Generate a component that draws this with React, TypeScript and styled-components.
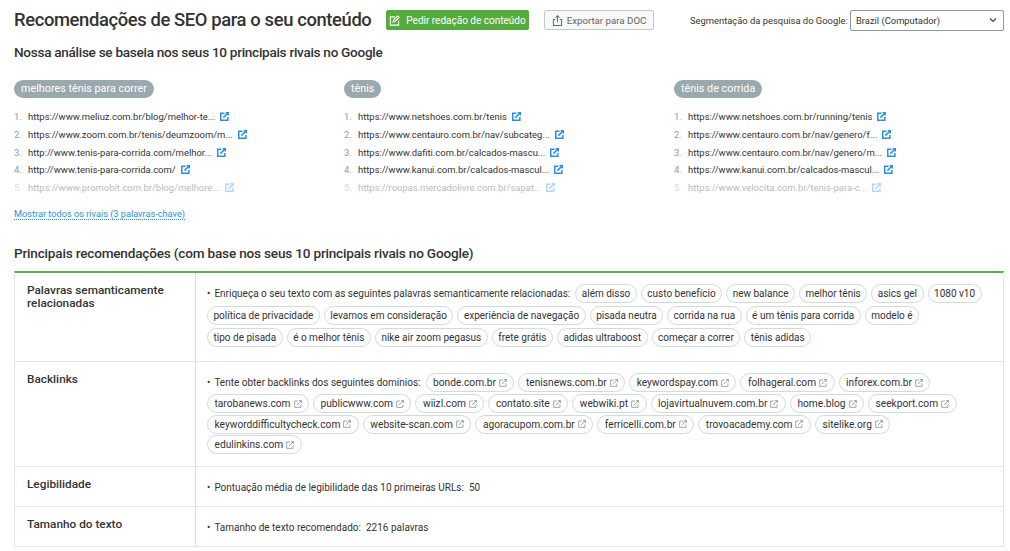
import React from "react";
import styled, { createGlobalStyle } from "styled-components";

const Global = createGlobalStyle`
  html, body { margin: 0; padding: 0; background: #fff; }
  body { font-family: Roboto, "Noto Sans", sans-serif; color: #333; overflow: hidden; }
`;

const Page = styled.div`
  width: 1010px;
  height: 551px;
  padding: 7px 6px 0 14px;
  box-sizing: border-box;
  overflow: hidden;
`;

const Toolbar = styled.div`
  display: flex;
  align-items: center;
  height: 26px;
`;

const Title = styled.h1`
  margin: 0;
  width: 372px;
  font-size: 18.4px;
  line-height: 26px;
  font-weight: 500;
  letter-spacing: -0.38px;
  white-space: nowrap;
`;

const ActionButton = styled.button<{ $primary?: boolean }>`
  display: flex;
  align-items: center;
  justify-content: center;
  gap: ${(p) => (p.$primary ? "6px" : "4px")};
  box-sizing: border-box;
  height: 20px;
  width: ${(p) => (p.$primary ? "143px" : "110px")};
  margin-right: ${(p) => (p.$primary ? "15px" : "36px")};
  padding: 0;
  border-radius: 2px;
  border: 1px solid ${(p) => (p.$primary ? "#55ab3e" : "#c3c9cb")};
  background: ${(p) => (p.$primary ? "#55ab3e" : "#f7f8f8")};
  color: ${(p) => (p.$primary ? "#fff" : "#666")};
  font-family: inherit;
  font-size: ${(p) => (p.$primary ? "10px" : "9.7px")};
  white-space: nowrap;
`;

const TargetLabel = styled.span`
  font-size: 9.4px;
  width: 160px;
  white-space: nowrap;
  color: #333;
`;

const Select = styled.div`
  box-sizing: border-box;
  width: 154px;
  height: 21px;
  display: flex;
  align-items: center;
  justify-content: space-between;
  padding: 0 6px 0 5px;
  border: 1px solid #8b9aa3;
  border-radius: 2px;
  font-size: 9.4px;
  color: #333;
`;

const Subtitle = styled.h2`
  margin: 0;
  font-size: 13.6px;
  line-height: 20px;
  font-weight: 500;
`;

const Analysis = styled(Subtitle)`
  margin-top: 9px;
  letter-spacing: -0.3px;
`;

const Rivals = styled.div`
  display: grid;
  grid-template-columns: 330px 330px 330px;
  margin-top: 15px;
`;

const KeywordPill = styled.span`
  display: inline-block;
  height: 18px;
  line-height: 18px;
  padding: 0 7px;
  border-radius: 9px;
  background: #9aa9ae;
  color: #fff;
  font-size: 10.8px;
`;

const UrlList = styled.ol`
  list-style: none;
  margin: 10px 0 0;
  padding: 0;
`;

const UrlRow = styled.li<{ $faded?: boolean }>`
  display: flex;
  align-items: center;
  height: 17.7px;
  font-size: 9.45px;
  white-space: nowrap;
  opacity: ${(p) => (p.$faded ? 0.35 : 1)};
`;

const UrlIndex = styled.span`
  width: 14px;
  color: #999;
`;

const UrlIcon = styled.span`
  display: inline-flex;
  margin-left: 5px;
  color: #2b8fe8;
`;

const ShowAll = styled.a`
  display: inline-block;
  margin-top: 12px;
  font-size: 9.2px;
  color: #2f8fe0;
  border-bottom: 1px dotted #2f8fe0;
  line-height: 11px;
`;

const Recommendations = styled(Subtitle)`
  margin-top: 22px;
  letter-spacing: -0.2px;
`;

const Table = styled.div`
  margin-top: 8px;
  border-top: 2px solid #5cb046;
  border-left: 1px solid #e4e7e8;
  border-right: 1px solid #e4e7e8;
`;

const Row = styled.div<{ $height: number }>`
  display: grid;
  grid-template-columns: 181px 1fr;
  height: ${(p) => p.$height}px;
  box-sizing: border-box;
  border-bottom: 1px solid #e4e7e8;
`;

const RowTitle = styled.div`
  padding: 11px 12px 0;
  font-size: 11.8px;
  line-height: 13px;
  font-weight: 500;
  border-right: 1px dotted #c6cccf;
`;

const RowBody = styled.div<{ $gap?: number; $right?: number }>`
  padding: 11px ${(p) => p.$right ?? 13}px 0 11px;
  display: flex;
  flex-wrap: wrap;
  align-items: center;
  align-content: flex-start;
  gap: ${(p) => p.$gap ?? 3}px 4px;
  font-size: 10px;
`;

const Lead = styled.span`
  line-height: 19px;
  margin-right: 1px;

  &::before {
    content: "•";
    margin-right: 4px;
  }
`;

const Tag = styled.span<{ $wide?: boolean }>`
  display: inline-flex;
  align-items: center;
  gap: 3px;
  box-sizing: border-box;
  height: 19px;
  padding: 0 ${(p) => (p.$wide ? "6.5px" : "5.5px")};
  border: 1px solid #d4d9db;
  border-radius: 10px;
  color: #333;
  font-size: ${(p) => (p.$wide ? "10.2px" : "10px")};
  white-space: nowrap;
`;

const TagIcon = styled.span`
  display: inline-flex;
  color: #a0a7aa;
`;

const Plain = styled.span`
  line-height: 19px;
`;

const LinkOut = ({ size = 9, weight = 1.5 }: { size?: number; weight?: number }) => (
  <svg width={size} height={size} viewBox="0 0 12 12" fill="none" stroke="currentColor" strokeWidth={weight}>
    <path d="M6 1.500H1v9.500h9.500V6.500" />
    <path d="M4.500 7.500 11 1M7.500 .8H11.200V4.500" />
  </svg>
);

const PencilNote = () => (
  <svg width="11" height="11" viewBox="0 0 12 12" fill="none" stroke="currentColor" strokeWidth="1.2">
    <path d="M6.500 2H1.500v9h9V6" />
    <path d="M4.500 7.500 5 5.500 9.500 1l1.500 1.500L6.500 7z" />
  </svg>
);

const ExportIcon = () => (
  <svg width="11" height="11" viewBox="0 0 12 12" fill="none" stroke="currentColor" strokeWidth="1.1">
    <path d="M3.500 5H1.500v6.500h9V5H8.500" />
    <path d="M6 8V1M3.800 3 6 .8 8.200 3" />
  </svg>
);

const Chevron = () => (
  <svg width="8" height="6" viewBox="0 0 8 6" fill="none" stroke="#444" strokeWidth="1.2">
    <path d="M1 1.500 4 4.500 7 1.500" />
  </svg>
);

const rivals = [
  {
    keyword: "melhores tênis para correr",
    urls: [
      "https://www.meliuz.com.br/blog/melhor-te...",
      "https://www.zoom.com.br/tenis/deumzoom/m...",
      "http://www.tenis-para-corrida.com/melhor...",
      "http://www.tenis-para-corrida.com/",
      "https://www.promobit.com.br/blog/melhore...",
    ],
  },
  {
    keyword: "tênis",
    urls: [
      "https://www.netshoes.com.br/tenis",
      "https://www.centauro.com.br/nav/subcateg...",
      "https://www.dafiti.com.br/calcados-mascu...",
      "https://www.kanui.com.br/calcados-mascul...",
      "https://roupas.mercadolivre.com.br/sapat...",
    ],
  },
  {
    keyword: "tênis de corrida",
    urls: [
      "https://www.netshoes.com.br/running/tenis",
      "https://www.centauro.com.br/nav/genero/f...",
      "https://www.centauro.com.br/nav/genero/m...",
      "https://www.kanui.com.br/calcados-mascul...",
      "https://www.velocita.com.br/tenis-para-c...",
    ],
  },
];

const semanticWords = [
  "além disso", "custo benefício", "new balance", "melhor tênis", "asics gel", "1080 v10",
  "política de privacidade", "levamos em consideração", "experiência de navegação", "pisada neutra",
  "corrida na rua", "é um tênis para corrida", "modelo é", "tipo de pisada", "é o melhor tênis",
  "nike air zoom pegasus", "frete grátis", "adidas ultraboost", "começar a correr", "tênis adidas",
];

const backlinks = [
  "bonde.com.br", "tenisnews.com.br", "keywordspay.com", "folhageral.com", "inforex.com.br",
  "tarobanews.com", "publicwww.com", "wiizl.com", "contato.site", "webwiki.pt", "lojavirtualnuvem.com.br",
  "home.blog", "seekport.com", "keyworddifficultycheck.com", "website-scan.com", "agoracupom.com.br",
  "ferricelli.com.br", "trovoacademy.com", "sitelike.org", "edulinkins.com",
];

export default function App() {
  return (
    <Page>
      <Global />
      <Toolbar>
        <Title>Recomendações de SEO para o seu conteúdo</Title>
        <ActionButton $primary>
          <PencilNote />
          Pedir redação de conteúdo
        </ActionButton>
        <ActionButton>
          <ExportIcon />
          Exportar para DOC
        </ActionButton>
        <TargetLabel>Segmentação da pesquisa do Google:</TargetLabel>
        <Select>
          Brazil (Computador)
          <Chevron />
        </Select>
      </Toolbar>
      <Analysis>Nossa análise se baseia nos seus 10 principais rivais no Google</Analysis>
      <Rivals>
        {rivals.map((group) => (
          <div key={group.keyword}>
            <KeywordPill>{group.keyword}</KeywordPill>
            <UrlList>
              {group.urls.map((url, i) => (
                <UrlRow key={url} $faded={i === 4}>
                  <UrlIndex>{i + 1}.</UrlIndex>
                  {url}
                  <UrlIcon>
                    <LinkOut weight={2} />
                  </UrlIcon>
                </UrlRow>
              ))}
            </UrlList>
          </div>
        ))}
      </Rivals>
      <ShowAll>Mostrar todos os rivais (3 palavras-chave)</ShowAll>
      <Recommendations>Principais recomendações (com base nos seus 10 principais rivais no Google)</Recommendations>
      <Table>
        <Row $height={89}>
          <RowTitle>Palavras semanticamente relacionadas</RowTitle>
          <RowBody>
            <Lead>Enriqueça o seu texto com as seguintes palavras semanticamente relacionadas:</Lead>
            {semanticWords.map((word) => (
              <Tag key={word}>{word}</Tag>
            ))}
          </RowBody>
        </Row>
        <Row $height={105}>
          <RowTitle>Backlinks</RowTitle>
          <RowBody $gap={1.6} $right={30}>
            <Lead>Tente obter backlinks dos seguintes domínios:</Lead>
            {backlinks.map((domain) => (
              <Tag key={domain} $wide>
                {domain}
                <TagIcon>
                  <LinkOut size={8} />
                </TagIcon>
              </Tag>
            ))}
          </RowBody>
        </Row>
        <Row $height={40}>
          <RowTitle>Legibilidade</RowTitle>
          <RowBody>
            <Lead>Pontuação média de legibilidade das 10 primeiras URLs:</Lead>
            <Plain>50</Plain>
          </RowBody>
        </Row>
        <Row $height={40}>
          <RowTitle>Tamanho do texto</RowTitle>
          <RowBody>
            <Lead>Tamanho de texto recomendado:</Lead>
            <Plain>2216 palavras</Plain>
          </RowBody>
        </Row>
      </Table>
    </Page>
  );
}
